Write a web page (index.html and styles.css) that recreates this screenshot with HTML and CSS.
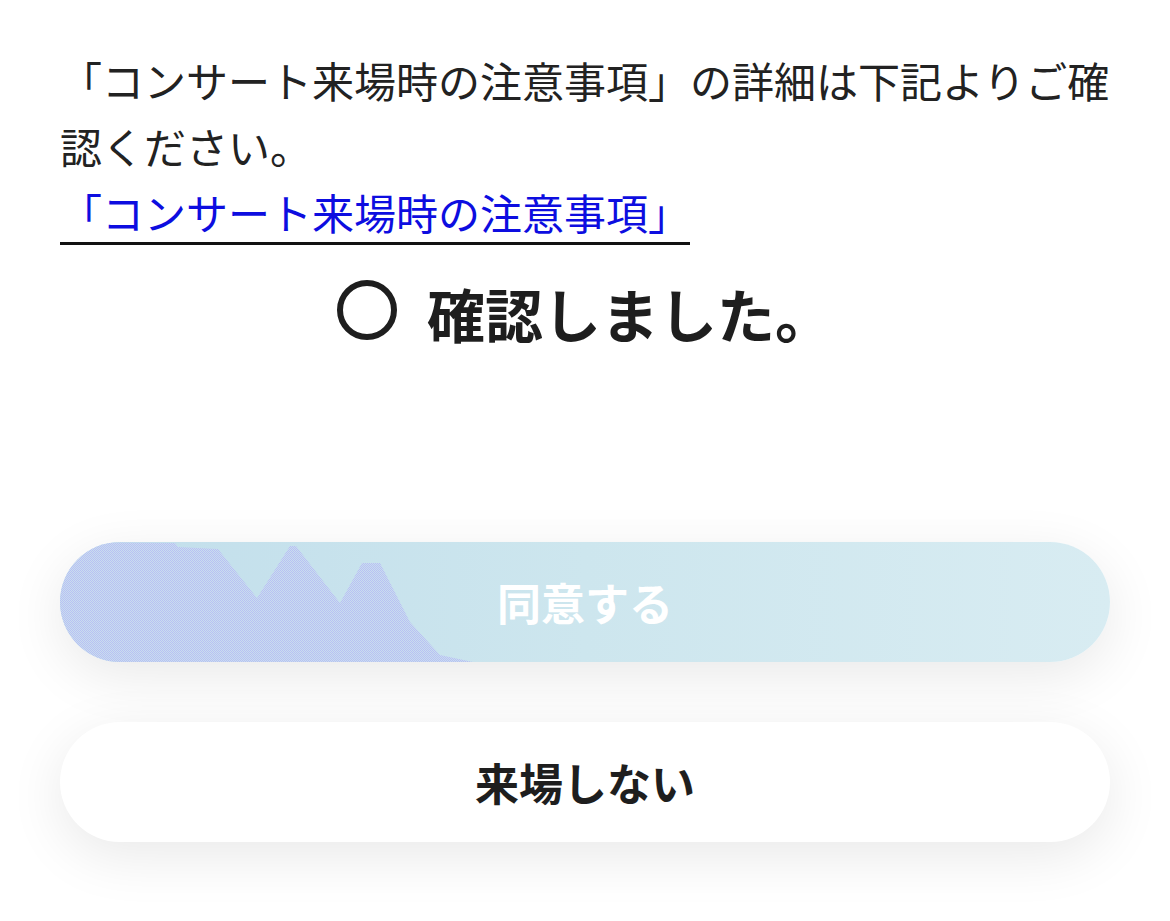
FILE: index.html
```html
<!DOCTYPE html>
<html lang="ja">
<head>
<meta charset="utf-8">
<title>注意事項</title>
<link rel="stylesheet" href="styles.css">
</head>
<body>
<main class="page">
  <p class="notice">「コンサート来場時の注意事項」の詳細は下記よりご確認ください。<br><a class="notice-link" href="#">「コンサート来場時の注意事項」</a></p>
  <div class="confirm-row">
    <span class="confirm-circle"></span>
    <span class="confirm-text">確認しました。</span>
  </div>
  <div class="actions">
    <button class="btn btn-agree" type="button">
      <svg class="btn-art" viewBox="0 0 1050 120" preserveAspectRatio="none" aria-hidden="true">
        <defs>
          <pattern id="dither" width="2" height="2" patternUnits="userSpaceOnUse">
            <rect width="2" height="2" fill="#c9ddef"/>
            <rect width="1" height="1" fill="#b8c0f3"/>
            <rect x="1" y="1" width="1" height="1" fill="#b8c0f3"/>
          </pattern>
        </defs>
        <path d="M0,0 L115,1 L118,5 L158,7 L197,56 L230,4 L236,4 L280,61 L302,21 L320,21 L350,80 L380,113 L413,120 L0,120 Z" fill="url(#dither)"/>
      </svg>
      <span class="btn-label">同意する</span>
    </button>
    <button class="btn btn-decline" type="button"><span class="btn-label">来場しない</span></button>
  </div>
</main>
</body>
</html>
```
FILE: styles.css
```css
html, body {
  margin: 0;
  padding: 0;
  background: #ffffff;
}

body {
  font-family: "Noto Sans CJK JP", "Noto Sans", sans-serif;
  color: #222222;
}

.page {
  padding: 47px 60px 80px;
}

.notice {
  margin: 0;
  font-size: 42px;
  line-height: 66px;
  color: #222222;
}

.notice-link {
  color: #0d0de0;
  text-decoration: none;
  border-bottom: 3px solid #111111;
}

.confirm-row {
  display: flex;
  justify-content: center;
  align-items: center;
  gap: 30px;
  height: 80px;
  margin-top: 28px;
}

.confirm-circle {
  width: 60px;
  height: 60px;
  box-sizing: border-box;
  border: 6px solid #1e1e1e;
  border-radius: 50%;
  margin-bottom: 6px;
}

.confirm-text {
  font-size: 58px;
  font-weight: 700;
  line-height: 80px;
  color: #1e1e1e;
}

.actions {
  display: flex;
  flex-direction: column;
  gap: 60px;
  margin-top: 189px;
}

.btn {
  position: relative;
  display: flex;
  align-items: center;
  justify-content: center;
  width: 100%;
  height: 120px;
  border: none;
  border-radius: 60px;
  padding: 0;
  overflow: hidden;
  font-family: "Noto Sans CJK JP", "Noto Sans", sans-serif;
  font-size: 44px;
  font-weight: 700;
  box-shadow: 0 14px 56px rgba(0, 0, 0, 0.09);
}

.btn-agree {
  background: linear-gradient(90deg, #c1deeb 0%, #cde6ee 50%, #d8ecf2 100%);
  color: #ffffff;
}

.btn-art {
  position: absolute;
  left: 0;
  top: 0;
  width: 100%;
  height: 100%;
}

.btn-label {
  position: relative;
}

.btn-decline {
  background: #ffffff;
  color: #1e1e1e;
}
```
